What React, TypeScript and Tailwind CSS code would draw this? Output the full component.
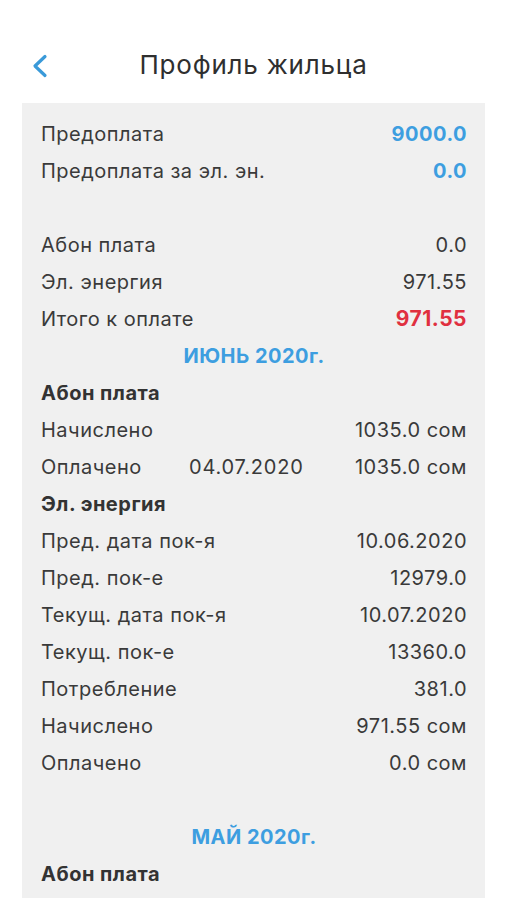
import React from "react";

type Row = { label: string; mid?: string; value?: string; kind?: "blue" | "red" | "bold" | "month" | "gap" };

const rows: Row[] = [
  { label: "Предоплата", value: "9000.0", kind: "blue" },
  { label: "Предоплата за эл. эн.", value: "0.0", kind: "blue" },
  { label: "", kind: "gap" },
  { label: "Абон плата", value: "0.0" },
  { label: "Эл. энергия", value: "971.55" },
  { label: "Итого к оплате", value: "971.55", kind: "red" },
  { label: "ИЮНЬ 2020г.", kind: "month" },
  { label: "Абон плата", kind: "bold" },
  { label: "Начислено", value: "1035.0 сом" },
  { label: "Оплачено", mid: "04.07.2020", value: "1035.0 сом" },
  { label: "Эл. энергия", kind: "bold" },
  { label: "Пред. дата пок-я", value: "10.06.2020" },
  { label: "Пред. пок-е", value: "12979.0" },
  { label: "Текущ. дата пок-я", value: "10.07.2020" },
  { label: "Текущ. пок-е", value: "13360.0" },
  { label: "Потребление", value: "381.0" },
  { label: "Начислено", value: "971.55 сом" },
  { label: "Оплачено", value: "0.0 сом" },
  { label: "", kind: "gap" },
  { label: "МАЙ 2020г.", kind: "month" },
  { label: "Абон плата", kind: "bold" },
];

const App = () => {
  return (
    <div className="w-[507px] h-[900px] bg-white overflow-hidden text-[#3a3a3a]" style={{ fontFamily: "Inter, 'Noto Sans', sans-serif" }}>
      {/* шапка */}
      <div className="relative h-[103px] flex items-center justify-center pt-[26px]">
        <button className="absolute left-[30px] top-[54px] w-[20px] h-[24px]">
          <svg width="20" height="24" viewBox="0 0 20 24" fill="none">
            <path d="M15 2.5 L5 12 L15 21.5" stroke="#3a9ad9" strokeWidth="3.2" strokeLinecap="round" strokeLinejoin="round" />
          </svg>
        </button>
        <h1 className="text-[26px] font-normal tracking-[0.8px] text-[#2f2f2f]">Профиль жильца</h1>
      </div>

      {/* панель */}
      <div className="mx-[22px] h-[795px] bg-[#f0f0f0] pt-[12px] pl-[19px] pr-[18px] text-[20px] tracking-[0.5px]">
        {rows.map((row, i) => {
          if (row.kind === "gap") return <div key={i} className="h-[37px]" />;
          if (row.kind === "month")
            return (
              <div key={i} className="h-[37px] flex items-center justify-center font-bold text-[#3d9ee0]">
                {row.label}
              </div>
            );
          if (row.kind === "bold")
            return (
              <div key={i} className="h-[37px] flex items-center font-bold text-[#333]">
                {row.label}
              </div>
            );
          return (
            <div key={i} className="h-[37px] flex items-center">
              <span className="w-[148px] whitespace-nowrap">{row.label}</span>
              <span className="flex-1 whitespace-nowrap tracking-[0.8px]">{row.mid}</span>
              <span
                className={
                  row.kind === "blue"
                    ? "font-bold text-[#3d9ee0]"
                    : row.kind === "red"
                    ? "font-bold text-[21px] text-[#e0303f]"
                    : ""
                }
              >
                {row.value}
              </span>
            </div>
          );
        })}
      </div>
    </div>
  );
};

export default App;
